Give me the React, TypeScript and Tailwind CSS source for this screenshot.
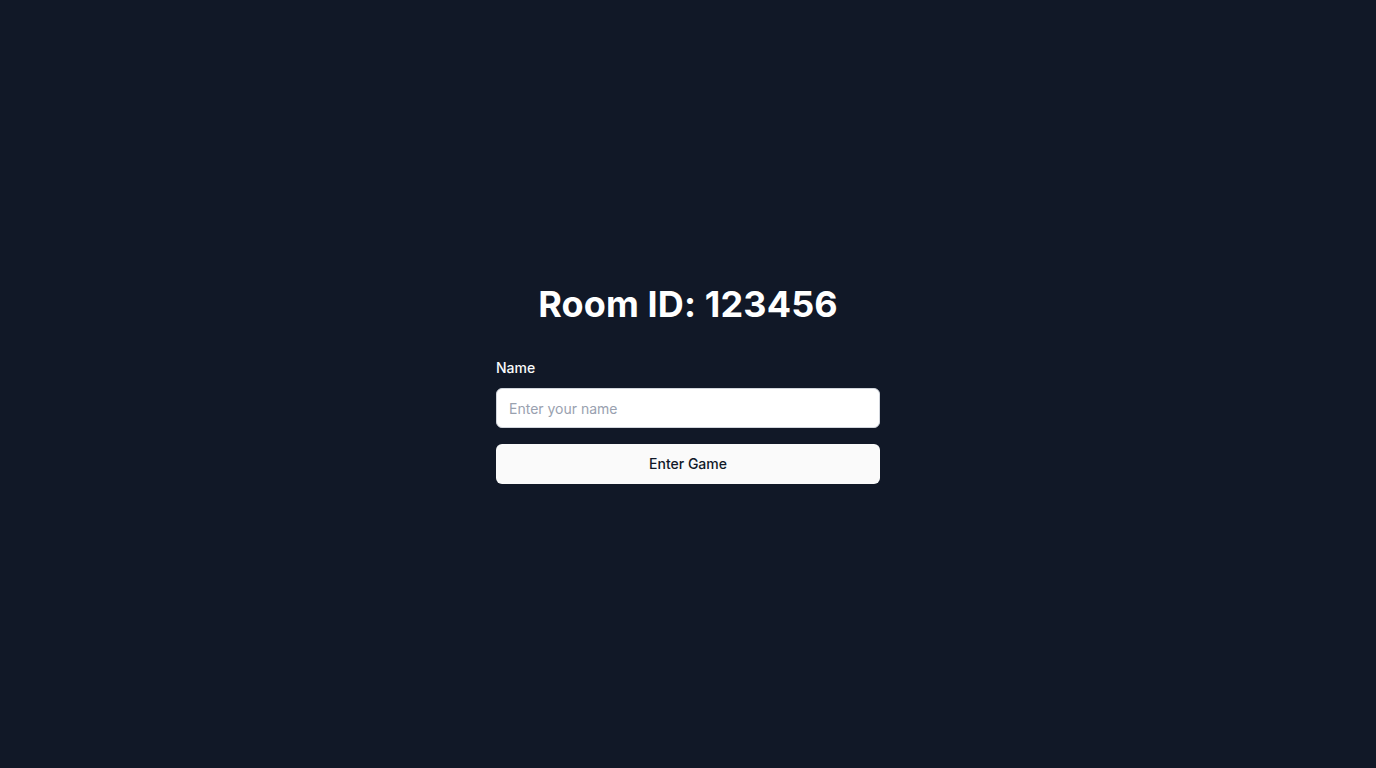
import React, { useState } from 'react';

const App: React.FC = () => {
  const [name, setName] = useState('');

  return (
    <div
      className="min-h-screen bg-[#111827] flex items-center justify-center"
      style={{ fontFamily: 'Inter, "Noto Sans", sans-serif' }}
    >
      <div className="w-full max-w-sm">
        <h1 className="text-4xl font-bold text-white text-center tracking-[0.004em] mb-[34px]">Room ID: 123456</h1>
        <form className="space-y-4" onSubmit={(e) => e.preventDefault()}>
          <div className="space-y-2.5">
            <label htmlFor="name" className="block text-sm font-medium text-gray-50">
              Name
            </label>
            <input
              id="name"
              value={name}
              onChange={(e) => setName(e.target.value)}
              placeholder="Enter your name"
              className="w-full h-10 px-3 rounded-md border border-gray-300 bg-white text-sm text-gray-900 placeholder:text-gray-400 outline-none"
            />
          </div>
          <button
            type="submit"
            className="w-full h-10 rounded-md bg-[#fafafa] text-sm font-medium text-gray-900"
          >
            Enter Game
          </button>
        </form>
      </div>
    </div>
  );
};

export default App;
